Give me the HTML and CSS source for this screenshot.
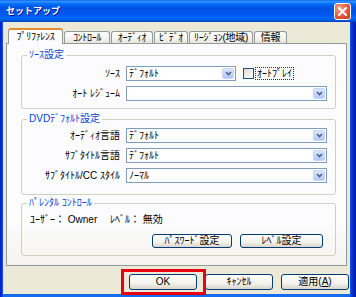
FILE: index.html
```html
<!DOCTYPE html>
<html>
<head>
    <title>セットアップ</title>
    <link rel="stylesheet" href="styles.css">
</head>
<body>
    <div class="window">
        <div class="titlebar">
            <span class="title">セットアップ</span>
            <span class="close">
                <svg width="9" height="9" viewBox="0 0 9 9"><path d="M1 1L8 8M8 1L1 8" stroke="#fff" stroke-width="2" stroke-linecap="square"/></svg>
            </span>
        </div>

        <div class="client">
            <div class="tabs">
                <div class="tab active tab-pref">ﾌﾟﾘﾌｧﾚﾝｽ</div>
                <div class="tab tab-control">ｺﾝﾄﾛｰﾙ</div>
                <div class="tab tab-audio">ｵｰﾃﾞｨｵ</div>
                <div class="tab tab-video">ﾋﾞﾃﾞｵ</div>
                <div class="tab tab-region">ﾘｰｼﾞｮﾝ(地域)</div>
                <div class="tab tab-info">情報</div>
            </div>

            <div class="panel">
                <div class="group group-source">
                    <div class="group-title">ｿｰｽ設定</div>
                    <div class="row">
                        <span class="label">ｿｰｽ</span>
                        <div class="combo combo-short">
                            <span class="combo-text">ﾃﾞﾌｫﾙﾄ</span>
                            <span class="drop"><svg width="7" height="5" viewBox="0 0 7 5"><path d="M1 1L3.5 3.5L6 1" fill="none" stroke="#4d6185" stroke-width="1.6"/></svg></span>
                        </div>
                        <span class="check"></span>
                        <span class="check-label">ｵｰﾄﾌﾟﾚｲ</span>
                    </div>
                    <div class="row">
                        <span class="label">ｵｰﾄ ﾚｼﾞｭｰﾑ</span>
                        <div class="combo">
                            <span class="combo-text"></span>
                            <span class="drop"><svg width="7" height="5" viewBox="0 0 7 5"><path d="M1 1L3.5 3.5L6 1" fill="none" stroke="#4d6185" stroke-width="1.6"/></svg></span>
                        </div>
                    </div>
                </div>

                <div class="group group-dvd">
                    <div class="group-title">DVDﾃﾞﾌｫﾙﾄ設定</div>
                    <div class="row">
                        <span class="label">ｵｰﾃﾞｨｵ言語</span>
                        <div class="combo">
                            <span class="combo-text">ﾃﾞﾌｫﾙﾄ</span>
                            <span class="drop"><svg width="7" height="5" viewBox="0 0 7 5"><path d="M1 1L3.5 3.5L6 1" fill="none" stroke="#4d6185" stroke-width="1.6"/></svg></span>
                        </div>
                    </div>
                    <div class="row">
                        <span class="label">ｻﾌﾞﾀｲﾄﾙ言語</span>
                        <div class="combo">
                            <span class="combo-text">ﾃﾞﾌｫﾙﾄ</span>
                            <span class="drop"><svg width="7" height="5" viewBox="0 0 7 5"><path d="M1 1L3.5 3.5L6 1" fill="none" stroke="#4d6185" stroke-width="1.6"/></svg></span>
                        </div>
                    </div>
                    <div class="row">
                        <span class="label">ｻﾌﾞﾀｲﾄﾙ/CC ｽﾀｲﾙ</span>
                        <div class="combo">
                            <span class="combo-text">ﾉｰﾏﾙ</span>
                            <span class="drop"><svg width="7" height="5" viewBox="0 0 7 5"><path d="M1 1L3.5 3.5L6 1" fill="none" stroke="#4d6185" stroke-width="1.6"/></svg></span>
                        </div>
                    </div>
                </div>

                <div class="group group-parental">
                    <div class="group-title">ﾊﾟﾚﾝﾀﾙ ｺﾝﾄﾛｰﾙ</div>
                    <div class="info">
                        <span class="info-user">ﾕｰｻﾞｰ： Owner</span>
                        <span>ﾚﾍﾞﾙ： 無効</span>
                    </div>
                    <div class="group-buttons">
                        <button class="btn btn-password">ﾊﾟｽﾜｰﾄﾞ設定</button>
                        <button class="btn btn-level">ﾚﾍﾞﾙ設定</button>
                    </div>
                </div>
            </div>

            <div class="actions">
                <button class="btn btn-main btn-ok">OK</button>
                <button class="btn btn-main">ｷｬﾝｾﾙ</button>
                <button class="btn btn-main">適用(<u>A</u>)</button>
            </div>
        </div>
    </div>
</body>
</html>
```

FILE: styles.css
```css
:root {
    --face: #ece9d8;
    --panel: #fcfcfe;
    --tab-border: #919b9c;
    --group-border: #d0d0bf;
    --legend: #0046d5;
    --field-border: #7f9db9;
    --button-border: #003c74;
}

body {
    margin: 0;
    font-family: "Liberation Sans", "Noto Sans CJK JP", sans-serif;
    font-size: 10px;
    line-height: 12px;
    color: #000;
    background: #fff;
}

.window {
    width: 356px;
    height: 297px;
    display: flex;
    flex-direction: column;
    background: linear-gradient(to right, #0019cf 0, #0831d9 2px, #166aee 3px, #166aee 349px, #0831d9 352px, #001ea0 356px);
}

/* title bar */
.titlebar {
    height: 22px;
    flex: none;
    display: flex;
    align-items: center;
    justify-content: space-between;
    padding: 0 5px 0 6px;
    background: linear-gradient(to bottom, #0058ee 0%, #3593ff 5%, #288eff 9%, #127dff 13%, #036ffc 18%, #0262ee 25%, #0057e5 32%, #0054e3 40%, #0055eb 60%, #005bf5 70%, #026afe 80%, #0062ef 88%, #0052d6 95%, #0040ab 100%);
}

.title {
    color: #fff;
    font-weight: bold;
    font-size: 9px;
    text-shadow: 1px 1px #0f1089;
}

.close {
    width: 15px;
    height: 15px;
    display: flex;
    align-items: center;
    justify-content: center;
    border: 1px solid #fff;
    border-radius: 3px;
    background: radial-gradient(circle at 30% 30%, #f0a58e, #e2583a 55%, #c43b17);
}

/* client area */
.client {
    flex: 1;
    margin: 0 6px 3px 3px;
    padding: 6px 3px 4px 3px;
    background: var(--face);
    display: flex;
    flex-direction: column;
}

.tabs {
    height: 15px;
    display: flex;
    align-items: flex-end;
    gap: 1px;
    padding-left: 2px;
    position: relative;
    z-index: 1;
}

.tab {
    box-sizing: border-box;
    height: 12px;
    border: 1px solid var(--tab-border);
    border-bottom: none;
    border-radius: 3px 3px 0 0;
    background: linear-gradient(to bottom, #fff, #f3f3ef 60%, #e6e4dc);
    line-height: 11px;
    text-align: center;
    white-space: nowrap;
    letter-spacing: -0.3px;
}

.tab.active {
    height: 16px;
    margin-bottom: -1px;
    background: var(--panel);
    border-top: 2px solid #e68b2c;
    line-height: 14px;
}

.tab-pref { width: 55px; }
.tab-control { width: 46px; }
.tab-audio { width: 42px; }
.tab-video { width: 34px; }
.tab-region { width: 64px; }
.tab-info { width: 33px; }

.panel {
    border: 1px solid var(--tab-border);
    background: linear-gradient(to bottom, #fcfcfe 80%, #f4f3ee);
    padding: 11px 10px 9px 14px;
}

/* group boxes */
.group {
    position: relative;
    border: 1px solid var(--group-border);
    border-radius: 3px;
}

.group-title {
    position: absolute;
    top: -7px;
    left: 5px;
    padding: 0 2px;
    color: var(--legend);
    background: var(--panel);
}

.group-source {
    padding: 10px 0 7px;
    display: flex;
    flex-direction: column;
    gap: 5px;
}

.group-dvd {
    margin-top: 10px;
    padding: 8px 0 11px;
    display: flex;
    flex-direction: column;
    gap: 5px;
}

.group-parental {
    margin-top: 8px;
    padding: 10px 12px 7px 8px;
}

.row {
    display: flex;
    align-items: center;
    height: 15px;
}

.label {
    width: 98px;
    flex: none;
    text-align: right;
    margin-right: 6px;
    white-space: nowrap;
}

.combo {
    width: 196px;
    height: 13px;
    border: 1px solid var(--field-border);
    background: #fff;
    display: flex;
    align-items: center;
    justify-content: space-between;
    padding: 0 1px 0 2px;
}

.combo-short {
    width: 105px;
}

.drop {
    box-sizing: border-box;
    width: 12px;
    height: 11px;
    display: flex;
    align-items: center;
    justify-content: center;
    border: 1px solid #c6d6fa;
    border-radius: 2px;
    background: linear-gradient(to bottom, #dbe5fd, #b4c8f7);
}

.check {
    width: 9px;
    height: 9px;
    margin-left: 7px;
    border: 1px solid #1c5180;
    background: linear-gradient(135deg, #dcdcd7, #fff);
}

.check-label {
    margin-left: 2px;
    padding: 0 1px;
    outline: 1px dotted #333;
    line-height: 11px;
}

.info {
    display: flex;
    white-space: nowrap;
}

.info-user {
    width: 80px;
}

.group-buttons {
    margin-top: 8px;
    display: flex;
    justify-content: flex-end;
    gap: 8px;
}

/* buttons */
.btn {
    font: inherit;
    line-height: 12px;
    color: #000;
    height: 14px;
    padding: 0;
    border: 1px solid var(--button-border);
    border-radius: 3px;
    background: linear-gradient(to bottom, #fff, #f2f1ec 60%, #d9d5cb);
}

.btn-password {
    width: 80px;
}

.btn-level {
    width: 83px;
}

.actions {
    margin-top: 8px;
    display: flex;
    justify-content: flex-end;
    gap: 8px;
    margin-right: -2px;
}

.btn-main {
    width: 68px;
    height: 16px;
}

.btn-ok {
    position: relative;
}

/* highlight frame around OK */
.btn-ok::after {
    content: "";
    position: absolute;
    left: -9px;
    right: -10px;
    top: -6px;
    bottom: -6px;
    border: 3px solid #e60012;
}
```
